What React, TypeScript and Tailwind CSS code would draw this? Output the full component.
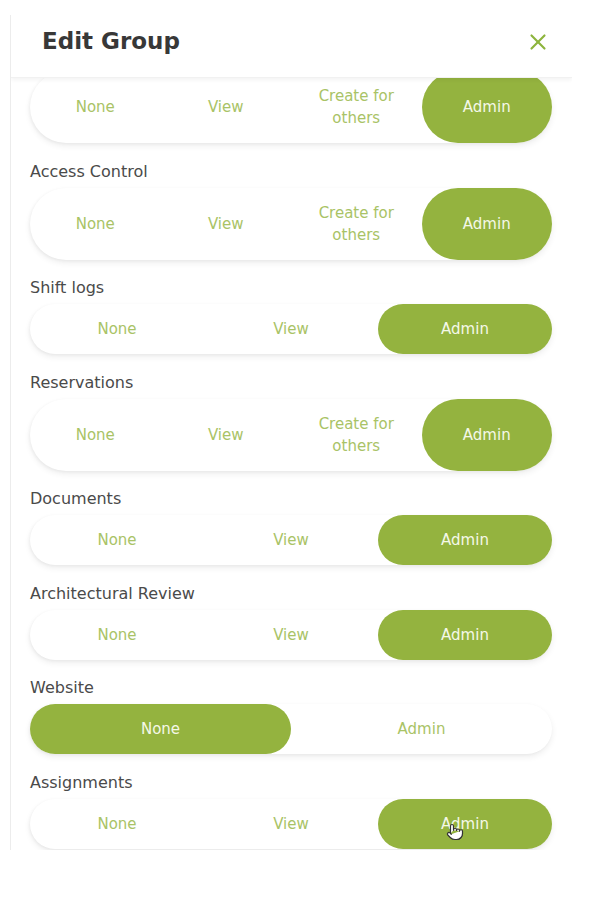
import { X, Pointer } from 'lucide-react';

type Perm = {
  label: string | null;
  options: string[];
  active: number;
};

const perms: Perm[] = [
  { label: null, options: ['None', 'View', 'Create for others', 'Admin'], active: 3 },
  { label: 'Access Control', options: ['None', 'View', 'Create for others', 'Admin'], active: 3 },
  { label: 'Shift logs', options: ['None', 'View', 'Admin'], active: 2 },
  { label: 'Reservations', options: ['None', 'View', 'Create for others', 'Admin'], active: 3 },
  { label: 'Documents', options: ['None', 'View', 'Admin'], active: 2 },
  { label: 'Architectural Review', options: ['None', 'View', 'Admin'], active: 2 },
  { label: 'Website', options: ['None', 'Admin'], active: 0 },
  { label: 'Assignments', options: ['None', 'View', 'Admin'], active: 2 },
];

function Segmented({ options, active, cursor }: { options: string[]; active: number; cursor?: boolean }) {
  const tall = options.length === 4;
  const cols = options.length === 4 ? 'grid-cols-4' : options.length === 3 ? 'grid-cols-3' : 'grid-cols-2';

  return (
    <div
      className={`grid ${cols} ${tall ? 'h-[72px]' : 'h-[50px]'} rounded-full bg-white shadow-[0_3px_6px_rgba(0,0,0,0.07),-1px_1px_3px_rgba(0,0,0,0.04)]`}
    >
      {options.map((opt, i) => (
        <div
          key={opt}
          className={`relative flex items-center justify-center rounded-full px-2 text-center text-[15px] leading-[22px] ${
            i === active ? 'bg-[#94b33f] text-[#f4f8e8]' : 'text-[#a9c366]'
          }`}
        >
          {opt === 'Create for others' ? (
            <span>
              Create for
              <br />
              others
            </span>
          ) : (
            opt
          )}
          {cursor && i === active && (
            <Pointer className="absolute left-[68px] top-[24px] h-[18px] w-[18px] fill-white text-[#333]" strokeWidth={1.6} />
          )}
        </div>
      ))}
    </div>
  );
}

export default function App() {
  return (
    <div className="h-[908px] w-[594px] bg-white font-['DejaVu_Sans',sans-serif]">
      <div className="ml-[10px] pt-[15px]">
        <div className="flex h-[835px] w-[562px] flex-col overflow-hidden border-l border-[#ececec]">
          {/* Header */}
          <header className="relative z-10 flex h-[63px] shrink-0 items-start justify-between border-b border-[#f1f1f1] bg-white pl-[31px] pr-[21px] pt-[10px] shadow-[0_2px_4px_rgba(0,0,0,0.05)]">
            <h1 className="text-[23px] font-bold leading-[32px] text-[#383838]">Edit Group</h1>
            <X className="mt-[4px] h-[26px] w-[26px] text-[#8db43d]" strokeWidth={2} />
          </header>

          {/* Permissions list */}
          <div className="flex-1 overflow-hidden">
            <div className="-mt-[7px] pl-[19px] pr-[20px]">
              {perms.map((p, idx) => (
                <div key={idx} className={idx === 0 ? '' : 'mt-[18.5px]'}>
                  {p.label && (
                    <div className="mb-[6px] text-[16px] leading-[20px] text-[#4a4a4a]">{p.label}</div>
                  )}
                  <Segmented options={p.options} active={p.active} cursor={p.label === 'Assignments'} />
                </div>
              ))}
            </div>
          </div>
        </div>
      </div>
    </div>
  );
}
